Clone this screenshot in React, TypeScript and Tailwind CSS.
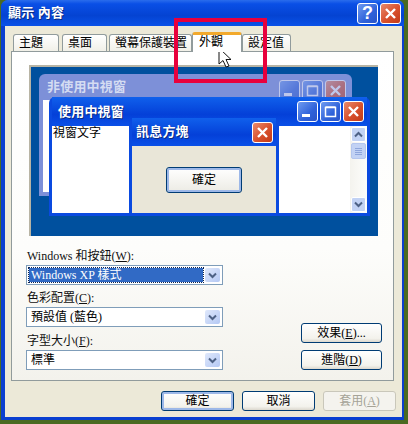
const font = "[font-family:'Liberation_Serif','Noto_Sans_CJK_TC',serif]";

function Chevron({ color = "#4d6185" }: { color?: string }) {
  return (
    <svg width="9" height="7" viewBox="0 0 9 7">
      <path d="M1 1.5 L4.5 5 L8 1.5" fill="none" stroke={color} strokeWidth="2" />
    </svg>
  );
}

function TitleButton({ kind, faded }: { kind: "min" | "max" | "close" | "help"; faded?: boolean }) {
  const red = kind === "close";
  const bg = red
    ? "bg-[linear-gradient(135deg,#e88a6c,#d8502c_55%,#c23a18)]"
    : "bg-[linear-gradient(135deg,#6f9bf0,#2f62da_60%,#2a54c8)]";
  return (
    <div className={`w-[21px] h-[21px] rounded-[3px] border border-white flex items-center justify-center ${bg} ${faded ? "opacity-50" : ""}`}>
      {kind === "help" ? (
        <span className="font-['Liberation_Sans',sans-serif] text-[18px] font-bold leading-none text-white">?</span>
      ) : (
        <svg width="15" height="15" viewBox="0 0 15 15">
          {kind === "min" && <rect x="2" y="10" width="8" height="3" fill="#fff" />}
          {kind === "max" && <path d="M2.5 3.5 H12.5 V12.5 H2.5 Z M2.5 3 H12.5" fill="none" stroke="#fff" strokeWidth="1.5" />}
          {kind === "close" && <path d="M3 3 L12 12 M12 3 L3 12" stroke="#fff" strokeWidth="2.4" />}
        </svg>
      )}
    </div>
  );
}

function Tab({ label, w, active }: { label: string; w: string; active?: boolean }) {
  if (active) {
    return (
      <div className={`${w} relative z-10 h-[20px] -mb-px bg-white border-x border-[#919b9c] rounded-t-[3px] border-t-[3px] border-t-[#f2a92c] text-[12px] leading-[14px] pl-[6px] text-black`}>
        {label}
      </div>
    );
  }
  return (
    <div className={`${w} h-[17px] bg-[linear-gradient(#fff,#f1f0e8)] border-x border-t border-[#919b9c] rounded-t-[3px] text-[12px] leading-[17px] pl-[5px] text-black`}>
      {label}
    </div>
  );
}

function Mnemonic({ before, letter, after }: { before: string; letter: string; after: string }) {
  return (
    <>
      {before}
      <span className="underline">{letter}</span>
      {after}
    </>
  );
}

function Select({ before, letter, after, value, selected }: { before: string; letter: string; after: string; value: string; selected?: boolean }) {
  return (
    <div>
      <div className="h-[16px] text-[12px] leading-[18px] text-[#111] pl-px">
        <Mnemonic before={before} letter={letter} after={after} />
      </div>
      <div className="mt-[2px] w-[197px] h-[20px] bg-white border border-[#7f9db9] p-[2px] flex gap-[2px]">
        <div className={`flex-1 text-[12px] leading-[14px] pl-[2px] ${selected ? "bg-[#316ac5] text-white outline-1 outline-dotted outline-[#10244c]" : "text-black"}`}>
          {value}
        </div>
        <div className="w-[15px] rounded-[2px] bg-[linear-gradient(135deg,#dfe8fb,#b4c8f4)] flex items-center justify-center">
          <Chevron />
        </div>
      </div>
    </div>
  );
}

function XpButton({ children, w, def, disabled }: { children: React.ReactNode; w: string; def?: boolean; disabled?: boolean }) {
  const cls = disabled
    ? "border-[#c9c7ba] text-[#a5a397] bg-[#f4f3ee]"
    : `border-[#003c74] text-black bg-[linear-gradient(#fff,#f3f2ec_80%,#dcd8ce)] ${def ? "shadow-[inset_0_0_0_2px_#9db8e8]" : ""}`;
  return (
    <div className={`${w} h-[20px] rounded-[3px] border text-[12px] leading-[18px] text-center ${cls}`}>{children}</div>
  );
}

export default function App() {
  return (
    <div className={`relative w-[408px] h-[424px] overflow-hidden bg-[#4a6a22] ${font}`}>
      <div className="ml-[1px] w-[403px] h-[420px] flex flex-col rounded-t-[7px] overflow-hidden bg-[#0a3fd0]">
        {/* title bar */}
        <div className="h-[26px] shrink-0 flex items-center justify-between pl-[7px] pr-[3px] bg-[linear-gradient(#2a6cec,#0a4fe6_15%,#0443d2_60%,#0a52e8)]">
          <span className="text-[13px] font-bold text-white [text-shadow:1px_1px_#0a2a80] tracking-[0.2px]">顯示 內容</span>
          <div className="flex gap-[2px]">
            <TitleButton kind="help" />
            <TitleButton kind="close" />
          </div>
        </div>

        {/* dialog body */}
        <div className="flex-1 ml-[4px] mr-[2px] mb-[3px] bg-[#ece9d8] pt-[6px] pl-[6px] flex flex-col">
          <div className="h-[19px] flex items-end pl-[2px]">
            <Tab label="主題" w="w-[46px]" />
            <div className="ml-[3px]"><Tab label="桌面" w="w-[45px]" /></div>
            <div className="ml-[2px]"><Tab label="螢幕保護裝置" w="w-[83px]" /></div>
            <Tab label="外觀" w="w-[50px]" active />
            <Tab label="設定值" w="w-[49px]" />
          </div>

          <div className="w-[383px] h-[330px] border border-[#919b9c] bg-[linear-gradient(#fff,#fdfdfb_60%,#f3f2ec)] pt-[13px] pl-[14px]">
            {/* preview */}
            <div className="relative ml-[3px] w-[349px] h-[171px] bg-[#00509e] border-l-2 border-t-2 border-[#b8b4a4]">
              {/* inactive window */}
              <div className="absolute left-[8px] top-[7px] w-[313px] h-[122px] rounded-t-[6px] bg-[#7d90d8] p-[4px] pt-0">
                <div className="h-[26px] pl-[4px] flex items-center justify-between text-[13px] font-bold text-[#d4dcf2] pr-[2px] tracking-[0.2px]">
                  非使用中視窗
                  <div className="flex gap-[2px] mt-[6px]">
                    <TitleButton kind="min" faded />
                    <TitleButton kind="max" faded />
                    <TitleButton kind="close" faded />
                  </div>
                </div>
                <div className="h-[92px] bg-white" />
              </div>

              {/* active window */}
              <div className="absolute left-[18px] top-[30px] w-[321px] h-[119px] rounded-t-[6px] bg-[#0a4ae0] p-[3px] pt-0 flex flex-col">
                <div className="h-[29px] shrink-0 pl-[6px] pr-[3px] flex items-center justify-between text-[13px] font-bold text-white bg-[linear-gradient(#1060ec,#0440d8_60%,#0a50e8)] [text-shadow:1px_1px_#0a2a80] tracking-[0.2px]">
                  使用中視窗
                  <div className="flex gap-[2px]">
                    <TitleButton kind="min" />
                    <TitleButton kind="max" />
                    <TitleButton kind="close" />
                  </div>
                </div>
                <div className="flex-1 bg-white relative flex justify-end">
                  <span className="absolute left-[1px] top-0 text-[12px] leading-[14px] text-black">視窗文字</span>
                  <div className="w-[17px] bg-[linear-gradient(90deg,#f4f3ee,#fdfdfb)] flex flex-col justify-between p-px">
                    <div className="flex flex-col gap-px">
                      <div className="h-[15px] rounded-[2px] bg-[#c2d2f4] border border-white flex items-center justify-center rotate-180"><Chevron /></div>
                      <div className="h-[16px] rounded-[2px] bg-[#c2d2f4] border border-[#b4c6ee] flex flex-col items-center justify-center gap-px">
                        <div className="w-[7px] h-px bg-[#8ea6dc]" />
                        <div className="w-[7px] h-px bg-[#8ea6dc]" />
                        <div className="w-[7px] h-px bg-[#8ea6dc]" />
                        <div className="w-[7px] h-px bg-[#8ea6dc]" />
                      </div>
                    </div>
                    <div className="h-[15px] rounded-[2px] bg-[#c2d2f4] border border-white flex items-center justify-center"><Chevron /></div>
                  </div>
                </div>
              </div>

              {/* message box */}
              <div className="absolute left-[98px] top-[51px] w-[150px] h-[98px] rounded-t-[6px] bg-[#0a4ae0] p-[3px] pt-0 flex flex-col">
                <div className="h-[28px] shrink-0 pl-[4px] pr-[3px] flex items-center justify-between text-[13px] font-bold text-white bg-[linear-gradient(#1060ec,#0440d8_60%,#0a50e8)] [text-shadow:1px_1px_#0a2a80] tracking-[0.2px]">
                  訊息方塊
                  <TitleButton kind="close" />
                </div>
                <div className="flex-1 bg-[#e9e6d8] flex justify-center pt-[21px]">
                  <div className="w-[76px] h-[26px] rounded-[3px] border border-[#003c74] shadow-[inset_0_0_0_2px_#9db8e8] bg-[linear-gradient(#fff,#ecebe4)] text-[12px] leading-[24px] text-center text-black">確定</div>
                </div>
              </div>
            </div>

            {/* form */}
            <div className="mt-[11px] w-[356px] flex justify-between items-end">
              <div className="flex flex-col gap-[4px]">
                <Select before="Windows 和按鈕(" letter="W" after="):" value="Windows XP 樣式" selected />
                <Select before="色彩配置(" letter="C" after="):" value="預設值 (藍色)" />
                <div className="mt-px">
                  <Select before="字型大小(" letter="F" after="):" value="標準" />
                </div>
              </div>
              <div className="flex flex-col gap-[7px]">
                <XpButton w="w-[81px]"><Mnemonic before="效果(" letter="E" after=")..." /></XpButton>
                <XpButton w="w-[81px]"><Mnemonic before="進階(" letter="D" after=")" /></XpButton>
              </div>
            </div>
          </div>

          {/* footer */}
          <div className="mt-[10px] pl-[150px] flex gap-[8px]">
            <XpButton w="w-[73px]" def>確定</XpButton>
            <XpButton w="w-[73px]">取消</XpButton>
            <XpButton w="w-[73px]" disabled><Mnemonic before="套用(" letter="A" after=")" /></XpButton>
          </div>
        </div>
      </div>

      {/* annotation */}
      <div className="absolute left-[174px] top-[18px] w-[93px] h-[65px] border-[4px] border-[#e8003c]" />
      <svg className="absolute left-[218px] top-[47px]" width="16" height="22" viewBox="0 0 16 22">
        <path d="M1 1 V17 L5 13.5 L8 20 L11 19 L8 12.5 H13 Z" fill="#fff" stroke="#111" strokeWidth="1" />
      </svg>
    </div>
  );
}
